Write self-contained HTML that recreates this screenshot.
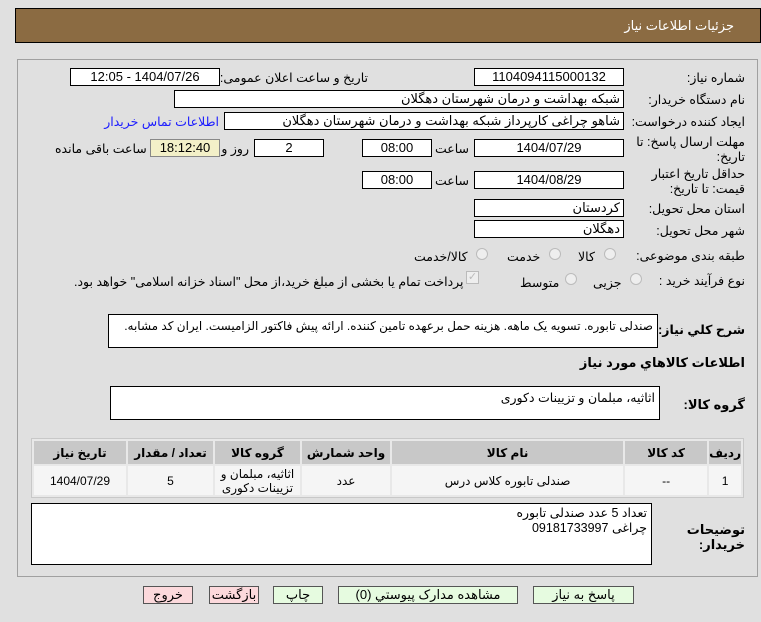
<!DOCTYPE html>
<html><head><meta charset="utf-8"><style>
*{box-sizing:border-box;margin:0;padding:0}
body{width:761px;height:622px;background:#e0e0e0;font-family:"Liberation Sans","DejaVu Sans",sans-serif;font-size:12px;color:#000;position:relative;overflow:hidden;direction:rtl}
.a{position:absolute;white-space:nowrap}
.hdr{left:15px;top:8px;width:746px;height:35px;background:#8b6b42;border:1px solid #000}
.hdr span{position:absolute;right:26px;top:9px;color:#fff;font-size:13px}
.panel{left:17px;top:59px;width:741px;height:518px;border:1px solid #a0a0a0}
.in{position:absolute;background:#fff;border:1px solid #000;height:18px;font-size:13px;line-height:16px;text-align:center}
.l{position:absolute;font-size:12.5px;white-space:nowrap}
.ta{position:absolute;background:#fff;border:1px solid #000;font-size:12.5px;padding:3px 4px;text-align:right;line-height:17px}
.rad{position:absolute;width:12px;height:12px;border-radius:50%;border:1px solid #bbb;background:#eee}
table{position:absolute;left:31px;top:438px;width:713px;border-collapse:separate;border-spacing:2px;border:1px solid #c8c8c8;background:#e8e8e8}
th{background:#c8c8c8;height:23px;font-size:12px;font-weight:bold}
td{background:#f5f5f5;height:29px;text-align:center;font-size:12px;line-height:14px}
.btn{position:absolute;top:586px;height:18px;border:1px solid #555;background:#e6fbe0;font-size:13px;text-align:center;line-height:16px}
</style></head><body>
<div class="a hdr"><span>جزئیات اطلاعات نیاز</span></div>
<div class="a panel"></div>

<div class="l" style="right:16px;top:70px">شماره نیاز:</div>
<div class="in" style="left:474px;top:68px;width:150px">1104094115000132</div>
<div class="l" style="right:393px;top:70px">تاریخ و ساعت اعلان عمومی:</div>
<div class="in" style="left:70px;top:68px;width:150px">1404/07/26 - 12:05</div>

<div class="l" style="right:16px;top:92px">نام دستگاه خریدار:</div>
<div class="in" style="left:174px;top:90px;width:450px;text-align:right;padding-right:3px">شبکه بهداشت و درمان شهرستان دهگلان</div>

<div class="l" style="right:16px;top:114px">ایجاد کننده درخواست:</div>
<div class="in" style="left:224px;top:112px;width:400px;text-align:right;padding-right:3px">شاهو چراغی کارپرداز شبکه بهداشت و درمان شهرستان دهگلان</div>
<div class="l" style="right:542px;top:114px;color:#1a1aff">اطلاعات تماس خریدار</div>

<div class="l" style="right:16px;top:135px;line-height:15px;text-align:right">مهلت ارسال پاسخ: تا<br>تاریخ:</div>
<div class="in" style="left:474px;top:139px;width:150px">1404/07/29</div>
<div class="l" style="left:435px;top:141px">ساعت</div>
<div class="in" style="left:362px;top:139px;width:70px">08:00</div>
<div class="in" style="left:254px;top:139px;width:70px">2</div>
<div class="l" style="right:512px;top:141px">روز و</div>
<div class="in" style="left:150px;top:139px;width:70px;background:#f3f0c8;border-color:#888">18:12:40</div>
<div class="l" style="left:55px;top:141px">ساعت باقی مانده</div>

<div class="l" style="right:16px;top:167px;line-height:15px;text-align:right">حداقل تاریخ اعتبار<br>قیمت: تا تاریخ:</div>
<div class="in" style="left:474px;top:171px;width:150px">1404/08/29</div>
<div class="l" style="left:435px;top:173px">ساعت</div>
<div class="in" style="left:362px;top:171px;width:70px">08:00</div>

<div class="l" style="right:16px;top:201px">استان محل تحویل:</div>
<div class="in" style="left:474px;top:199px;width:150px;text-align:right;padding-right:3px">کردستان</div>
<div class="l" style="right:16px;top:223px">شهر محل تحویل:</div>
<div class="in" style="left:474px;top:220px;width:150px;text-align:right;padding-right:3px">دهگلان</div>

<div class="l" style="right:16px;top:248px">طبقه بندی موضوعی:</div>
<div class="rad" style="left:604px;top:248px"></div><div class="l" style="left:578px;top:249px">کالا</div>
<div class="rad" style="left:549px;top:248px"></div><div class="l" style="left:507px;top:249px">خدمت</div>
<div class="rad" style="left:476px;top:248px"></div><div class="l" style="left:414px;top:249px">کالا/خدمت</div>

<div class="l" style="right:16px;top:273px">نوع فرآیند خرید :</div>
<div class="rad" style="left:630px;top:273px"></div><div class="l" style="left:593px;top:275px">جزیی</div>
<div class="rad" style="left:565px;top:273px"></div><div class="l" style="left:520px;top:275px">متوسط</div>
<div class="a" style="left:466px;top:271px;width:13px;height:13px;border:1px solid #bbb;background:#eee;color:#bbb;font-size:11px;line-height:11px;text-align:center">✓</div>
<div class="l" style="left:74px;top:274px">پرداخت تمام یا بخشی از مبلغ خرید،از محل "اسناد خزانه اسلامی" خواهد بود.</div>

<div class="l" style="right:16px;top:322px;font-weight:bold">شرح کلي نياز:</div>
<div class="ta" style="left:108px;top:314px;width:550px;height:34px;white-space:nowrap;overflow:hidden;font-size:12px">صندلی تابوره. تسویه یک ماهه. هزینه حمل برعهده تامین کننده. ارائه پیش فاکتور الزامیست. ایران کد مشابه.</div>
<div class="l" style="right:16px;top:355px;font-weight:bold;font-size:13px">اطلاعات کالاهاي مورد نياز</div>
<div class="l" style="right:16px;top:397px;font-weight:bold;font-size:13px">گروه کالا:</div>
<div class="ta" style="left:110px;top:386px;width:550px;height:34px">اثاثیه، مبلمان و تزیینات دکوری</div>

<table><tr><th style="width:27px">رديف</th><th style="width:82px">کد کالا</th><th>نام کالا</th><th style="width:88px">واحد شمارش</th><th style="width:85px">گروه کالا</th><th style="width:85px">تعداد / مقدار</th><th style="width:92px">تاريخ نياز</th></tr>
<tr><td>1</td><td>--</td><td>صندلی تابوره کلاس درس</td><td>عدد</td><td>اثاثیه، مبلمان و<br>تزیینات دکوری</td><td>5</td><td>1404/07/29</td></tr></table>

<div class="l" style="right:16px;top:522px;font-weight:bold;font-size:13px;line-height:15px;text-align:right">توضیحات<br>خریدار:</div>
<div class="ta" style="left:31px;top:503px;width:621px;height:62px;padding-top:2px;line-height:15px">تعداد 5 عدد صندلی تابوره<br>چراغی 09181733997</div>

<div class="btn" style="left:533px;width:101px">پاسخ به نياز</div>
<div class="btn" style="left:338px;width:180px">مشاهده مدارک پيوستي (0)</div>
<div class="btn" style="left:273px;width:50px">چاپ</div>
<div class="btn" style="left:209px;width:50px;background:#fcd9dc">بازگشت</div>
<div class="btn" style="left:143px;width:50px;background:#fcd9dc">خروج</div>
</body></html>
